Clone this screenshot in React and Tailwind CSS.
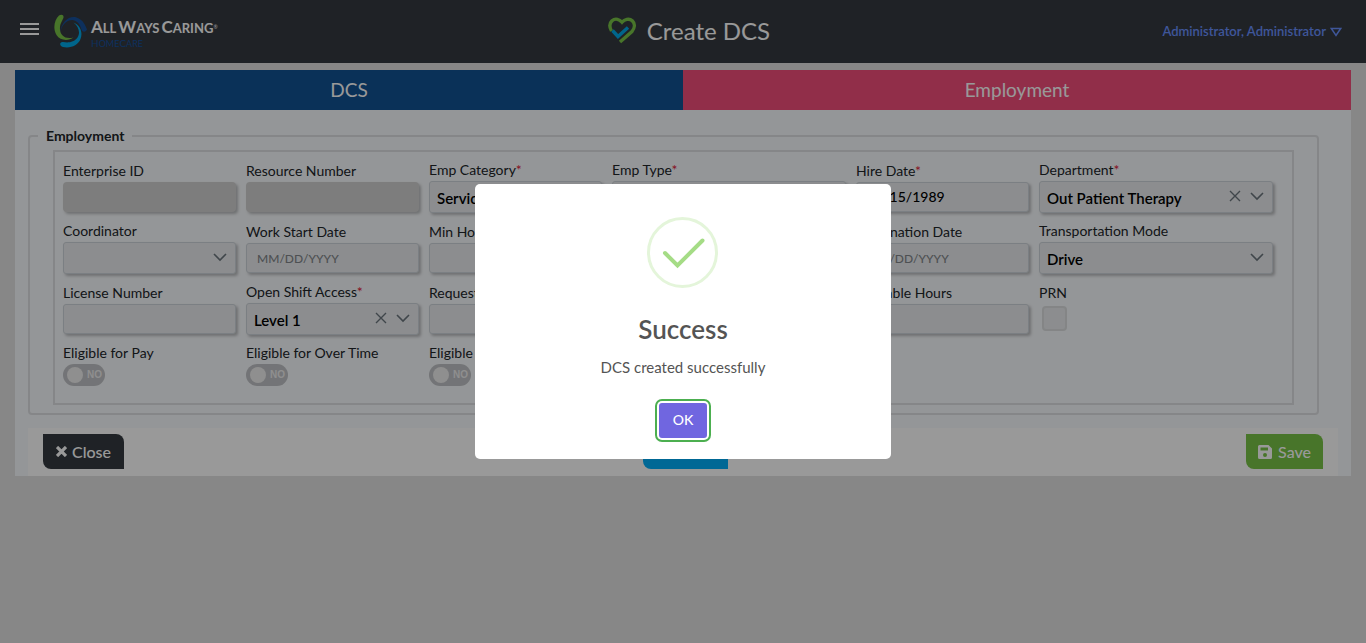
import React from "react";

const controlBase =
  "w-full rounded-[3px] border border-[#ced4da] bg-[#e9ecef] shadow-[2px_2px_3px_rgba(0,0,0,0.25)] outline-none";

function Label({ htmlFor, required, children }) {
  return (
    <label htmlFor={htmlFor} className="block h-5 whitespace-nowrap text-[14px] leading-[18px] text-[#212529]">
      {children}
      {required && <span className="text-[#e0223b]">*</span>}
    </label>
  );
}

function TextField({ id, label, required, disabled, placeholder, value }) {
  return (
    <div className="pr-[10px] pt-1.5">
      <Label htmlFor={id} required={required}>{label}</Label>
      <input
        id={id}
        type="text"
        disabled={disabled}
        placeholder={placeholder}
        defaultValue={value}
        className={
          disabled
            ? "block h-[30px] w-full rounded-[4px] bg-[#d1d1d1] shadow-[2px_2px_3px_rgba(0,0,0,0.25)]"
            : `${controlBase} block h-[30px] px-[10px] pb-0.5 text-[14px] font-medium text-black placeholder:text-[12px] placeholder:text-[#83868a]`
        }
      />
    </div>
  );
}

function SelectField({ id, label, required, value, clearable }) {
  return (
    <div className="pr-[10px] pt-[5px]">
      <Label htmlFor={id} required={required}>{label}</Label>
      <div className="relative">
        <select
          id={id}
          defaultValue={value}
          className={`${controlBase} block h-8 appearance-none px-[7px] pt-0.5 text-[15px] font-semibold text-black`}
        >
          <option>{value}</option>
        </select>
        {clearable && (
          <button type="button" aria-label={`Clear ${label}`} className="absolute right-[31px] top-2 size-[14px] text-[#6c757d]">
            <svg viewBox="0 0 14 14" className="size-[14px]" fill="none" stroke="currentColor" strokeWidth="1.4">
              <path d="M2 2l10 10M12 2L2 12" />
            </svg>
          </button>
        )}
        <svg viewBox="0 0 14 14" className="pointer-events-none absolute right-[9px] top-2 size-[14px] text-[#6c757d]" fill="none" stroke="currentColor" strokeWidth="1.6">
          <path d="M1 4l6 6 6-6" />
        </svg>
      </div>
    </div>
  );
}

function Toggle({ id, label }) {
  return (
    <div className="pt-[5px]">
      <Label htmlFor={id}>{label}</Label>
      <div className="relative flex h-[22px] w-[42px] items-center justify-between rounded-full bg-[#c0c2c6] pl-1 pr-[3px]">
        <input id={id} type="checkbox" role="switch" className="absolute inset-0 m-0 cursor-pointer opacity-0" />
        <span className="size-4 rounded-full bg-[#eeeeee]" />
        <span className="font-['Liberation_Sans',sans-serif] text-[10px] font-bold leading-none text-[#eeeeee]">NO</span>
      </div>
    </div>
  );
}

function Brand() {
  return (
    <a href="#home" aria-label="All Ways Caring HomeCare" className="flex items-start">
      <svg viewBox="0 0 34 34" className="h-[34px] w-[34px]" fill="none">
        <path d="M6 19C7.500 7.500 15 1.500 22.500 3.500C29 5.500 31.500 11.500 33 15.500C31.500 18.500 28.500 18.500 27.500 15.500C25.500 8 20.500 4.500 15 6.500C10.500 8 7.500 12.500 6 19Z" fill="#17509b" />
        <path d="M5 1.500C7.500 0 10 1 9.500 3.500C8.500 7 5.500 9.500 6 15.500C6.500 21.500 11 25.500 19.500 23.500C14 27.500 6 26.500 2.500 21C-1.500 14.500 0.500 5.500 5 1.500Z" fill="#78c346" />
        <path d="M19.500 8.500C26.500 11.500 29 18.500 26.500 25C24 31.500 16.500 34.500 9 33C5 32 5.500 27.500 9 28C14 29 20 28.500 23.500 23.500C26.500 19 25 13 19.500 8.500Z" fill="#00a9e8" />
      </svg>
      <span className="ml-[3px] flex flex-col whitespace-nowrap pt-0.5 text-white">
        <span className="flex items-baseline text-[13px] font-bold leading-[22px]">
          <span className="text-[17px]">A</span>
          <span>LL</span>
          <span className="ml-0.5 text-[17px]">W</span>
          <span>AYS</span>
          <span className="ml-0.5 text-[17px]">C</span>
          <span>ARING</span>
          <span className="self-start text-[5px] font-normal">®</span>
        </span>
        <span className="flex items-baseline text-[9px] leading-[9px] text-[#17509b]">
          <span className="text-[10px]">H</span>
          <span>OME</span>
          <span className="text-[10px]">C</span>
          <span>ARE</span>
        </span>
      </span>
    </a>
  );
}

export default function App() {
  return (
    <div className="min-h-screen bg-[#e1e1e1] font-['Lato','Open_Sans',sans-serif]">
      <header className="grid h-[63px] grid-cols-3 items-center bg-[#343a40] px-5 pb-0.5">
        <div className="flex items-center gap-[15px]">
          <button type="button" aria-label="Open menu" className="mb-1 flex w-[19px] flex-col gap-[3px]">
            <span className="h-[2px] bg-white" />
            <span className="h-[2px] bg-white" />
            <span className="h-[2px] bg-white" />
          </button>
          <Brand />
        </div>
        <div className="flex items-center justify-center gap-[11px] pl-3">
          <svg viewBox="0 0 28 27" className="h-[27px] w-7" fill="none" strokeWidth="3.400">
            <path d="M3.500 14C1.500 10.500 1.200 6.500 4 3.800C7.500 0.800 11.500 2.500 14 5.200C16.500 2.500 21 0.800 24.300 3.800C27.500 7 26.500 11.500 24 14.500L12 25" stroke="#78c346" />
            <path d="M4.500 13.500L10 19.500L20 10.500" stroke="#00a9e8" />
          </svg>
          <h1 className="whitespace-nowrap text-[24px] leading-8 text-white">Create DCS</h1>
        </div>
        <a href="#account" className="flex items-center justify-end gap-1 whitespace-nowrap pr-1 pt-0.5 text-[13px] font-semibold text-[#6990ff]">
          Administrator, Administrator
          <svg viewBox="0 0 12 10" className="h-[10px] w-3" fill="none" stroke="currentColor" strokeWidth="1.500">
            <path d="M1.300 1.500h9.400L6 8.500z" />
          </svg>
        </a>
      </header>

      <main className="mx-[15px] mt-[7px] bg-[#f7fafd]">
        <nav className="grid grid-cols-2 text-center text-[19px] leading-10 text-white">
          <a href="#dcs" className="bg-[#125293]">DCS</a>
          <a href="#employment" className="bg-[#f24e7b]">Employment</a>
        </nav>

        <form className="px-[13px] pt-4">
          <fieldset className="mr-[19px] rounded-[4px] border-2 border-[#dee0e3] pb-2 pt-1">
            <legend className="ml-2 px-2 text-[14px] font-bold leading-5 text-[#212529]">Employment</legend>
            <div className="mx-[23px] border-2 border-[#dee0e3] pb-[3px] pl-2 pt-1">
              <div className="grid auto-rows-[61px] grid-cols-[3fr_3fr_3fr_4fr_3fr_4fr] pr-[9px]">
                <TextField id="enterprise" label="Enterprise ID" disabled />
                <TextField id="resource" label="Resource Number" disabled />
                <SelectField id="category" label="Emp Category" required value="Service" />
                <SelectField id="type" label="Emp Type" required value="Full Time" />
                <TextField id="hire" label="Hire Date" required value="08/15/1989" />
                <SelectField id="department" label="Department" required value="Out Patient Therapy" clearable />

                <SelectField id="coordinator" label="Coordinator" value="" />
                <TextField id="start" label="Work Start Date" placeholder="MM/DD/YYYY" />
                <TextField id="min" label="Min Hours" />
                <TextField id="max" label="Max Hours" />
                <TextField id="termination" label="Termination Date" placeholder="MM/DD/YYYY" />
                <SelectField id="transport" label="Transportation Mode" value="Drive" />

                <TextField id="license" label="License Number" />
                <SelectField id="shift" label="Open Shift Access" required value="Level 1" clearable />
                <TextField id="requested" label="Requested Hours" />
                <div />
                <TextField id="available" label="Available Hours" />
                <div className="pt-1.5">
                  <Label htmlFor="prn">PRN</Label>
                  <input id="prn" type="checkbox" className="ml-[3px] mt-0.5 block size-[25px] appearance-none rounded-[4px] border-2 border-[#dcdee0] bg-[#e9ecef]" />
                </div>

                <Toggle id="pay" label="Eligible for Pay" />
                <Toggle id="overtime" label="Eligible for Over Time" />
                <Toggle id="benefits" label="Eligible for Benefits" />
              </div>
            </div>
          </fieldset>

          <div className="mt-[13px] flex items-start justify-between bg-white px-[15px] pb-[7px] pt-1.5 text-[16px] text-white">
            <button type="button" className="flex h-[35px] items-center gap-[5px] rounded-bl-lg rounded-tr-lg bg-[#343a40] px-[13px] font-medium">
              <svg viewBox="0 0 11 11" className="size-[11px]" stroke="currentColor" strokeWidth="3.200">
                <path d="M1 1l9 9M10 1L1 10" />
              </svg>
              Close
            </button>
            <button type="button" className="h-[35px] w-[85px] rounded-bl-lg rounded-tr-lg bg-[#00adf8]">Reset</button>
            <button type="submit" className="flex h-[35px] items-center gap-1.5 rounded-bl-lg rounded-tr-lg bg-[#78c346] px-3 font-medium">
              <svg viewBox="0 0 14 14" className="size-[14px]" fill="currentColor">
                <path fillRule="evenodd" d="M1.500 0H10.500L14 3.500V12.500Q14 14 12.500 14H1.500Q0 14 0 12.500V1.500Q0 0 1.500 0ZM2.500 2.500V5.500H10V2.500ZM7 8A2 2 0 1 0 7 12A2 2 0 1 0 7 8Z" />
              </svg>
              Save
            </button>
          </div>
        </form>
      </main>

      <div className="fixed inset-0 flex items-center justify-center bg-black/40">
        <section role="dialog" aria-modal="true" aria-labelledby="dialog-title" className="flex w-[416px] flex-col items-center rounded-[5px] bg-white pb-[21px] pt-[33px] text-[#545454]">
          <svg viewBox="0 0 72 71" className="h-[71px] w-[72px]" fill="none">
            <circle cx="35.500" cy="35.500" r="34" stroke="#e4f5da" strokeWidth="3" />
            <path d="M18 36L30.500 48.500L55.500 23.500" stroke="#a5dc86" strokeWidth="4" strokeLinecap="round" />
          </svg>
          <h2 id="dialog-title" className="mt-[23px] text-[26px] font-semibold leading-9">Success</h2>
          <p className="mt-2.5 text-[15px] leading-5">DCS created successfully</p>
          <button type="button" className="mt-[26px] h-[35px] w-12 rounded-[3px] bg-[#7066e0] pb-0.5 text-[14px] font-medium text-white shadow-[0_0_0_2px_#fff,0_0_0_4px_#4caf50]">
            OK
          </button>
        </section>
      </div>
    </div>
  );
}
